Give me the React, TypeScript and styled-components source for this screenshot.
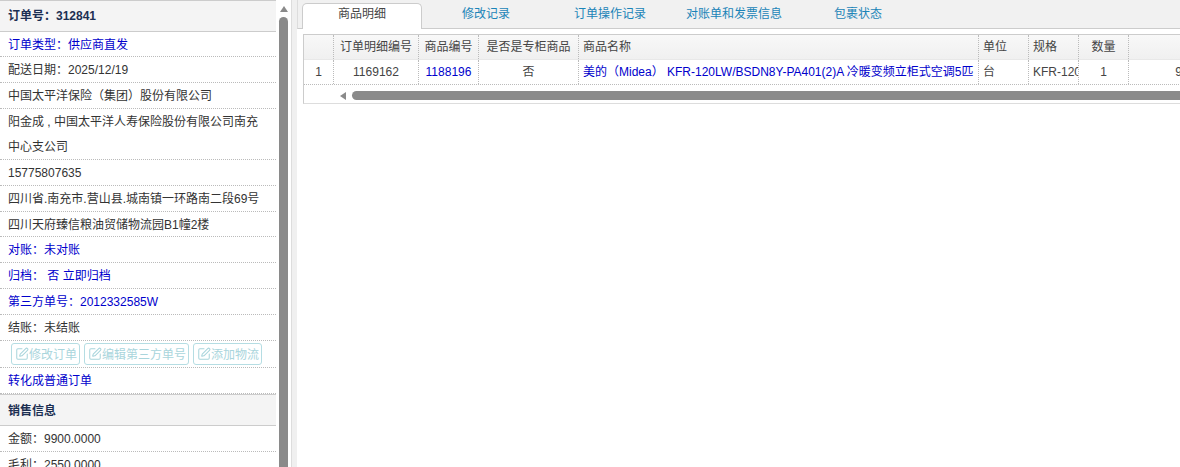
import React from "react";
import styled, { createGlobalStyle } from "styled-components";
import { SquarePen } from "lucide-react";

const Global = createGlobalStyle`
  html, body { margin: 0; padding: 0; width: 1180px; height: 467px; overflow: hidden; background: #fff; }
  body { font-family: "Liberation Sans", Arial, "Noto Sans CJK SC", sans-serif; font-size: 12px; color: #333; }
`;
const Page = styled.div`display: flex; width: 1180px; height: 467px; overflow: hidden;`;
const Sidebar = styled.aside`width: 276px; flex: none; height: 467px; overflow: hidden;`;
const SectionHead = styled.div<{ $first?: boolean }>`height: ${p => (p.$first ? 29.6 : 30.1)}px; line-height: ${p => (p.$first ? 31 : 32)}px; padding-left: 8px; background: #f4f4f4; border-top: 1px solid #ccc; border-bottom: 1px solid #ccc; font-weight: bold; color: #1c2f52;`;
const Row = styled.div<{ $blue?: boolean; $lines?: number }>`height: ${p => 24.87 * (p.$lines || 1) - 1}px; padding: 1px 0 0 8px; line-height: 24.87px; border-bottom: 1px dotted #bbb; color: ${p => (p.$blue ? "#0000cc" : "#333")};`;
const Buttons = styled.div`display: flex; gap: 4px; height: 27px; padding: 2px 0 0 11px; box-sizing: border-box; border-bottom: 1px dotted #bbb;`;
const GhostBtn = styled.span`display: flex; align-items: center; height: 22px; padding: 0 2px 0 3px; border: 1px solid #b5dde3; border-radius: 3px; color: #a9d5dc; box-sizing: border-box; svg { flex: none; }`;
const Track = styled.div`width: 15px; flex: none; height: 467px; background: #fff; display: flex; flex-direction: column; align-items: center; padding-top: 6px; box-sizing: border-box;`;
const ArrowUp = styled.div`width: 0; height: 0; border-left: 4px solid transparent; border-right: 4px solid transparent; border-bottom: 6px solid #8a8a8a;`;
const Thumb = styled.div`width: 9px; flex: 1; margin-top: 5px; background: #8a8a8a; border-radius: 5px 5px 0 0;`;
const Splitter = styled.div`width: 5px; flex: none; background: #f0f0f0; border-left: 1px solid #ddd;`;
const Main = styled.main`flex: 1; min-width: 0; overflow: hidden;`;
const TabBar = styled.div`display: flex; gap: 4px; height: 29px; padding: 3px 0 0 4px; box-sizing: border-box; background: #f1f1f1; border-left: 1px solid #ddd; border-bottom: 1px solid #ccc;`;
const Tab = styled.div<{ $active?: boolean }>`width: 120px; height: 26px; line-height: 21px; text-align: center; box-sizing: border-box; color: ${p => (p.$active ? "#444" : "#1a84b8")}; ${p => p.$active ? "background:#fff;border:1px solid #ccc;border-bottom:none;border-radius:5px 5px 0 0;" : "padding-top:1px;"}`;
const Content = styled.div`padding: 5px 0 0 6px;`;
const Grid = styled.div`width: 933px; border: 1px solid #ccc; border-right: none; border-bottom-color: #ddd;`;
const TableRow = styled.div<{ $head?: boolean }>`display: flex; height: 25px; box-sizing: border-box; background: ${p => (p.$head ? "linear-gradient(#f8f8f8,#f0f0f0)" : "#fff")}; border-bottom: 1px ${p => (p.$head ? "solid #e8e8e8" : "dotted #bbb")};`;
const Cell = styled.div<{ $w: number; $align?: string; $blue?: boolean }>`width: ${p => p.$w}px; flex: none; box-sizing: border-box; padding: 0 4px; line-height: 24px; text-align: ${p => p.$align || "center"}; white-space: nowrap; overflow: hidden; border-right: 1px dotted #bbb; color: ${p => (p.$blue ? "#0000cc" : "#444")};`;
const HScroll = styled.div`display: flex; align-items: center; height: 18px; box-sizing: border-box; padding: 3px 0 0 36px;`;
const ArrowLeft = styled.div`width: 0; height: 0; border-top: 4px solid transparent; border-bottom: 4px solid transparent; border-right: 6px solid #8a8a8a; margin-right: 6px;`;
const HThumb = styled.div`flex: 1; height: 9px; background: #8a8a8a; border-radius: 5px 0 0 5px;`;

const widths = [30, 85, 60, 100, 400, 50, 50, 50, 108];
const head: [string, string][] = [["", "center"], ["订单明细编号", "center"], ["商品编号", "center"], ["是否是专柜商品", "center"], ["商品名称", "left"], ["单位", "left"], ["规格", "left"], ["数量", "center"], ["", "center"]];

const Btn = ({ label }: { label: string }) => (
  <GhostBtn><SquarePen size={14} strokeWidth={1.75} />{label}</GhostBtn>
);

export default function App() {
  return (
    <Page>
      <Global />
      <Sidebar>
        <SectionHead $first>订单号：312841</SectionHead>
        <Row $blue>订单类型：供应商直发</Row>
        <Row>配送日期：2025/12/19</Row>
        <Row>中国太平洋保险（集团）股份有限公司</Row>
        <Row $lines={2}>阳金成 , 中国太平洋人寿保险股份有限公司南充<br />中心支公司</Row>
        <Row>15775807635</Row>
        <Row>四川省.南充市.营山县.城南镇一环路南二段69号</Row>
        <Row>四川天府臻信粮油贸储物流园B1幢2楼</Row>
        <Row $blue>对账：未对账</Row>
        <Row $blue>归档： 否 立即归档</Row>
        <Row $blue>第三方单号：2012332585W</Row>
        <Row>结账：未结账</Row>
        <Buttons><Btn label="修改订单" /><Btn label="编辑第三方单号" /><Btn label="添加物流" /></Buttons>
        <Row $blue>转化成普通订单</Row>
        <SectionHead>销售信息</SectionHead>
        <Row>金额：9900.0000</Row>
        <Row>毛利：2550.0000</Row>
      </Sidebar>
      <Track><ArrowUp /><Thumb /></Track>
      <Splitter />
      <Main>
        <TabBar>
          <Tab $active>商品明细</Tab>
          <Tab>修改记录</Tab>
          <Tab>订单操作记录</Tab>
          <Tab>对账单和发票信息</Tab>
          <Tab>包裹状态</Tab>
        </TabBar>
        <Content>
          <Grid>
            <TableRow $head>
              {head.map(([t, a], i) => <Cell key={i} $w={widths[i]} $align={a}>{t}</Cell>)}
            </TableRow>
            <TableRow>
              <Cell $w={30}>1</Cell>
              <Cell $w={85}>1169162</Cell>
              <Cell $w={60} $blue>1188196</Cell>
              <Cell $w={100}>否</Cell>
              <Cell $w={400} $align="left" $blue>美的（Midea） KFR-120LW/BSDN8Y-PA401(2)A 冷暖变频立柜式空调5匹</Cell>
              <Cell $w={50} $align="left">台</Cell>
              <Cell $w={50} $align="left">KFR-120LW/BSDN8Y</Cell>
              <Cell $w={50}>1</Cell>
              <Cell $w={108} $align="right">9900.0000</Cell>
            </TableRow>
            <HScroll><ArrowLeft /><HThumb /></HScroll>
          </Grid>
        </Content>
      </Main>
    </Page>
  );
}
